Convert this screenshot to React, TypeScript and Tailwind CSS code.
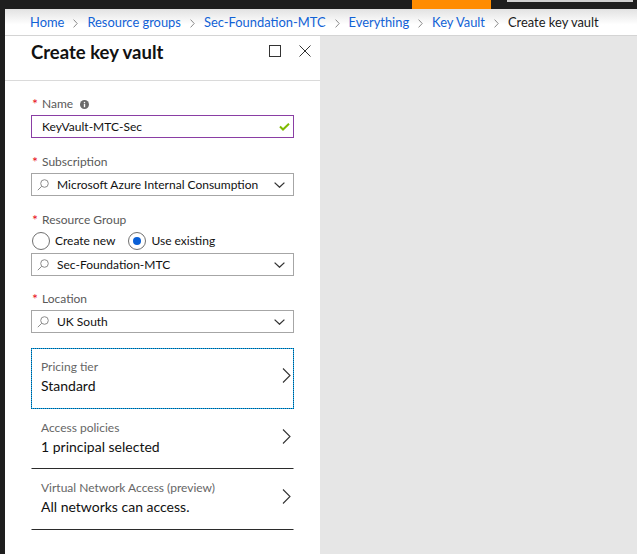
import React from "react";

const SearchIcon = () => (
  <svg width="12" height="12" viewBox="0 0 12 12" fill="none" stroke="#8c8c8c" strokeWidth="1">
    <circle cx="7.5" cy="4.5" r="3.8" />
    <path d="M4.8 7.2 L0.8 11.2" />
  </svg>
);

const ChevronDown = () => (
  <svg width="11" height="6" viewBox="0 0 11 6" fill="none" stroke="#333" strokeWidth="1.3">
    <path d="M0.6 0.6 L5.5 5.2 L10.4 0.6" />
  </svg>
);

const ChevronRight = () => (
  <svg width="9" height="15" viewBox="0 0 9 15" fill="none" stroke="#333" strokeWidth="1.1">
    <path d="M1 0.5 L8 7.5 L1 14.5" />
  </svg>
);

const BreadSep = () => (
  <svg width="5" height="9" viewBox="0 0 5 9" fill="none" stroke="#8a8a8a" strokeWidth="1">
    <path d="M0.6 0.6 L4.2 4.5 L0.6 8.4" />
  </svg>
);

const InfoIcon = () => (
  <svg width="9" height="9" viewBox="0 0 10 10" className="ml-[7px]">
    <circle cx="5" cy="5" r="5" fill="#6b6b6b" />
    <rect x="4.25" y="4.2" width="1.5" height="3.8" fill="#fff" />
    <circle cx="5" cy="2.7" r="0.85" fill="#fff" />
  </svg>
);

const CheckIcon = () => (
  <svg width="11" height="8" viewBox="0 0 11 8" fill="none" stroke="#7fba00" strokeWidth="2">
    <path d="M1 3.5 L4 6.5 L10 0.7" />
  </svg>
);

const Label = ({ children, info = false }: { children: React.ReactNode; info?: boolean }) => (
  <div className="flex items-center h-[16px] leading-[16px] text-[12px] text-[#595959] mb-[3px]">
    <span className="w-[11px] text-[#e81123] text-[14px] leading-[16px] pl-[1px]">*</span>
    <span>{children}</span>
    {info && <InfoIcon />}
  </div>
);

const Select = ({ value }: { value: string }) => (
  <div className="h-[23px] border border-[#a6a6a6] flex items-center pl-[5px] pr-[8px]">
    <SearchIcon />
    <span className="ml-[8px] flex-1 text-[12px] text-[#111]">{value}</span>
    <ChevronDown />
  </div>
);

const Radio = ({ checked, label }: { checked: boolean; label: string }) => (
  <div className="flex items-center">
    <span className="w-[18px] h-[18px] rounded-full border border-[#707070] bg-white flex items-center justify-center">
      {checked && <span className="w-[8px] h-[8px] rounded-full bg-[#0a5fd6]" />}
    </span>
    <span className="ml-[5px] text-[12px] text-[#111]">{label}</span>
  </div>
);

const Item = ({
  label,
  value,
  variant,
  h,
}: {
  label: string;
  value: string;
  variant: "focus" | "line";
  h: string;
}) => (
  <div
    className={
      variant === "focus"
        ? "flex items-start border border-[#12b2f2] outline-1 outline-dotted outline-[#0d4f80] -outline-offset-1 pl-[9px] pr-[2px] pt-[10px] " + h
        : "flex items-start border border-transparent border-b-[#2b2b2b] pl-[9px] pr-[2px] pt-[10px] " + h
    }
  >
    <div className="flex-1 flex flex-col">
      <span className="h-[16px] leading-[16px] text-[12px] text-[#666]">{label}</span>
      <span className="mt-[1px] h-[20px] leading-[20px] text-[14px] text-[#111]">{value}</span>
    </div>
    <span className="mt-[9px]">
      <ChevronRight />
    </span>
  </div>
);

export default function App() {
  const crumbs = ["Home", "Resource groups", "Sec-Foundation-MTC", "Everything", "Key Vault"];
  return (
    <div className="w-[637px] h-[554px] bg-[#1e1e1e] flex flex-col overflow-hidden font-[Lato,sans-serif]">
      <div className="h-[9px] flex shrink-0">
        <div className="w-[412px]" />
        <div className="w-[79px] bg-[#ff8c00]" />
        <div className="w-[16px]" />
        <div className="w-[126px] h-[2px] bg-[#cfcfcf]" />
      </div>
      <div className="flex flex-1 min-h-0">
        <div className="w-[5px] shrink-0" />
        <div className="flex-1 flex flex-col min-w-0">
          <nav className="h-[27px] shrink-0 bg-gradient-to-b from-[#e2e2e2] to-white to-60% border-b border-[#d4d4d4] flex items-center pt-[2px] pl-[25px] gap-[9px] text-[12.9px] whitespace-nowrap">
            {crumbs.map((c) => (
              <React.Fragment key={c}>
                <span className="text-[#1162d6]">{c}</span>
                <BreadSep />
              </React.Fragment>
            ))}
            <span className="text-[#1a1a1a]">Create key vault</span>
          </nav>
          <div className="flex flex-1 min-h-0">
            <section className="w-[315px] shrink-0 bg-white flex flex-col">
              <header className="h-[45px] shrink-0 border-b border-[#dadada] flex items-start pt-[5px] pl-[26px] pr-[9px]">
                <h1 className="flex-1 text-[18.5px] font-bold text-[#111] leading-[22px]">Create key vault</h1>
                <svg width="12" height="12" viewBox="0 0 12 12" fill="none" stroke="#333" strokeWidth="1" className="mt-[4px]">
                  <rect x="0.5" y="0.5" width="11" height="11" />
                </svg>
                <svg width="12" height="12" viewBox="0 0 12 12" fill="none" stroke="#333" strokeWidth="1" className="mt-[4px] ml-[18px]">
                  <path d="M0.5 0.5 L11.5 11.5 M11.5 0.5 L0.5 11.5" />
                </svg>
              </header>
              <div className="flex flex-col px-[26px] pt-[15px]">
                <Label info>Name</Label>
                <div className="h-[23px] border border-[#8a3ea4] flex items-center pl-[10px] pr-[3px]">
                  <span className="flex-1 text-[12px] text-[#111]">KeyVault-MTC-Sec</span>
                  <CheckIcon />
                </div>

                <div className="mt-[16px]">
                  <Label>Subscription</Label>
                  <Select value="Microsoft Azure Internal Consumption" />
                </div>

                <div className="mt-[16px]">
                  <Label>Resource Group</Label>
                  <div className="h-[20px] flex items-center gap-[13px] pl-[1px]">
                    <Radio checked={false} label="Create new" />
                    <Radio checked label="Use existing" />
                  </div>
                  <div className="mt-[2px]">
                    <Select value="Sec-Foundation-MTC" />
                  </div>
                </div>

                <div className="mt-[15px]">
                  <Label>Location</Label>
                  <Select value="UK South" />
                </div>

                <div className="mt-[15px] flex flex-col">
                  <Item label="Pricing tier" value="Standard" variant="focus" h="h-[61px]" />
                  <Item label="Access policies" value="1 principal selected" variant="line" h="h-[60px]" />
                  <Item label="Virtual Network Access (preview)" value="All networks can access." variant="line" h="h-[61px]" />
                </div>
              </div>
            </section>
            <div className="flex-1 bg-[#e6e6e6]" />
          </div>
        </div>
      </div>
    </div>
  );
}
